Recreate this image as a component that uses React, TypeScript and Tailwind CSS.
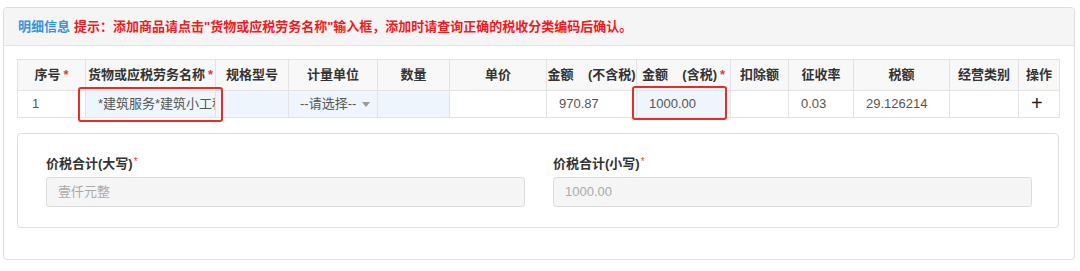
const cols = [68, 130, 73, 89, 72, 97, 90, 94, 58, 65, 96, 69, 41];

type Head = { label: string; required?: boolean };

const heads: Head[] = [
  { label: "序号", required: true },
  { label: "货物或应税劳务名称", required: true },
  { label: "规格型号" },
  { label: "计量单位" },
  { label: "数量" },
  { label: "单价" },
  { label: "金额    (不含税)" },
  { label: "金额    (含税)", required: true },
  { label: "扣除额" },
  { label: "征收率" },
  { label: "税额" },
  { label: "经营类别" },
  { label: "操作" },
];

function Star() {
  return <span className="ml-[3px] text-[#e4393c]">*</span>;
}

function Field({ label, value }: { label: string; value: string }) {
  return (
    <div className="flex flex-col">
      <div className="h-[20px] text-[13px] font-bold leading-[20px] text-[#333]">
        {label}
        <span className="relative -top-[3px] ml-[1px] text-[10px] font-normal text-[#f33a3a]">*</span>
      </div>
      <div className="mt-[3px] flex h-[30px] items-center rounded-[3px] border border-[#dcdcdc] bg-[#f5f5f5] px-[11px] text-[13px] text-[#aaa]">
        {value}
      </div>
    </div>
  );
}

export default function App() {
  const cell = "border border-[#e3e3e3] px-[12px] text-left text-[13px] text-[#555] font-normal whitespace-nowrap";
  const blue = "bg-[#eef5fd]";

  return (
    <div className="h-[271px] w-[1080px] bg-white pt-[7px] pl-[3px] pr-[5px] font-['Liberation_Sans','Noto_Sans_CJK_SC',sans-serif]">
      <div className="h-[253px] rounded-[4px] border border-[#dedede]">
        {/* header */}
        <div className="flex h-[38px] items-center rounded-t-[4px] border-b border-[#e3e3e3] bg-[#f5f5f5] px-[14px] text-[13px] font-bold">
          <span className="text-[#3596dc]">明细信息</span>
          <span className="ml-[4px] text-[#f5181c]">
            提示：添加商品请点击"货物或应税劳务名称"输入框，添加时请查询正确的税收分类编码后确认。
          </span>
        </div>

        <div className="pt-[13px] pl-[13px] pr-[14px]">
          <div className="relative">
            <table className="w-[1042px] table-fixed border-collapse">
              <colgroup>
                {cols.map((w, i) => (
                  <col key={i} style={{ width: w }} />
                ))}
              </colgroup>
              <thead>
                <tr className="h-[31px] bg-[#f8f8f8]">
                  {heads.map((h, i) => (
                    <th
                      key={i}
                      className="whitespace-pre border border-[#e3e3e3] p-0 text-center text-[13px] font-bold text-[#333]"
                    >
                      {h.label}
                      {h.required && <Star />}
                    </th>
                  ))}
                </tr>
              </thead>
              <tbody>
                <tr className="h-[27px]">
                  <td className={`${cell} pl-[14px]`}>1</td>
                  <td className={`${cell} ${blue} overflow-hidden`}>*建筑服务*建筑小工程</td>
                  <td className={`${cell} ${blue}`}></td>
                  <td className={`${cell} ${blue} pl-[11px] pr-0`}>
                    <div className="flex items-center">
                      <span>--请选择--</span>
                      <svg className="ml-[6px] shrink-0" width="8" height="5" viewBox="0 0 8 5">
                        <path d="M0 0h8L4 5z" fill="#999" />
                      </svg>
                    </div>
                  </td>
                  <td className={`${cell} ${blue}`}></td>
                  <td className={cell}></td>
                  <td className={cell}>970.87</td>
                  <td className={`${cell} ${blue}`}>1000.00</td>
                  <td className={cell}></td>
                  <td className={cell}>0.03</td>
                  <td className={cell}>29.126214</td>
                  <td className={cell}></td>
                  <td className={`${cell} text-center`}>
                    <span className="text-[20px] leading-none text-[#222]">+</span>
                  </td>
                </tr>
              </tbody>
            </table>
            {/* red annotation boxes */}
            <div className="absolute left-[61px] top-[28px] h-[35px] w-[145px] rounded-[3px] border-2 border-[#ec2a26]" />
            <div className="absolute left-[615px] top-[27px] h-[34px] w-[95px] rounded-[3px] border-2 border-[#ec2a26]" />
          </div>

          <div className="mt-[15px] grid w-[1042px] grid-cols-2 gap-[28px] rounded-[4px] border border-[#dedede] pt-[20px] pb-[20px] pl-[28px] pr-[26px]">
            <Field label="价税合计(大写)" value="壹仟元整" />
            <Field label="价税合计(小写)" value="1000.00" />
          </div>
        </div>
      </div>
    </div>
  );
}
